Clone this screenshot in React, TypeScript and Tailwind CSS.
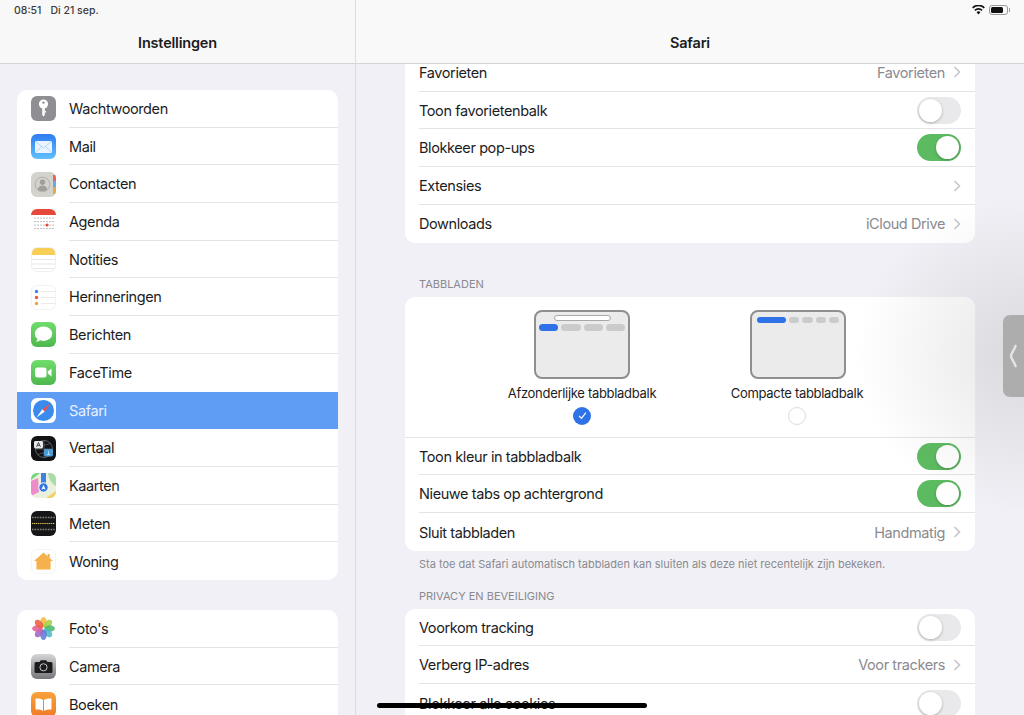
import { ReactNode } from "react";

const font = { fontFamily: "Inter, 'Noto Sans', sans-serif" };

function Tile({ className, children }: { className: string; children?: ReactNode }) {
  return (
    <div className={`w-[25px] h-[25px] rounded-[6px] overflow-hidden shrink-0 ${className}`}>
      <svg viewBox="0 0 25 25" width="25" height="25">
        {children}
      </svg>
    </div>
  );
}

const icons: Record<string, ReactNode> = {
  Wachtwoorden: (
    <Tile className="bg-[#8e8e93]">
      <circle cx="12.5" cy="8" r="4.6" fill="#fff" />
      <circle cx="12.5" cy="6.6" r="1.2" fill="#8e8e93" />
      <path d="M11.2 11h2.6v8l-1.3 1.6-1.3-1.6z" fill="#fff" />
      <path d="M13.5 15h1.5v1.4h-1.5z" fill="#fff" />
    </Tile>
  ),
  Mail: (
    <Tile className="bg-gradient-to-b from-[#2f7cf0] to-[#62c0fb]">
      <rect x="4" y="7" width="17" height="12" rx="1.5" fill="#eaf4ff" />
      <path d="M4.5 7.5l8 6.5 8-6.5M4.5 18.5l6-6M20.5 18.5l-6-6" fill="none" stroke="#9cc7f2" strokeWidth=".7" />
    </Tile>
  ),
  Contacten: (
    <Tile className="bg-[#d3d2cc]">
      <rect x="22" y="3" width="3" height="6" fill="#e2645a" />
      <rect x="22" y="9" width="3" height="6" fill="#6fa8dc" />
      <rect x="22" y="15" width="3" height="7" fill="#e0a94a" />
      <circle cx="11.5" cy="12.5" r="7.3" fill="none" stroke="#a9a8a3" strokeWidth=".8" />
      <circle cx="11.5" cy="10.3" r="2.7" fill="#a09f9a" />
      <path d="M6.6 17.5c.8-3 2.7-4 4.9-4s4.1 1 4.9 4c-1.3 1-3 1.5-4.9 1.5s-3.6-.5-4.9-1.5z" fill="#a09f9a" />
    </Tile>
  ),
  Agenda: (
    <Tile className="bg-white">
      <rect width="25" height="6" fill="#e5493a" />
      <g fill="#77777a">
        {[9, 12.5, 16, 19.5].map((y) =>
          [4, 7, 10, 13, 16, 19, 22].map((x) => <circle key={`${x}-${y}`} cx={x} cy={y} r=".6" />),
        )}
      </g>
      <circle cx="16" cy="16" r="1.6" fill="#e5493a" />
    </Tile>
  ),
  Notities: (
    <Tile className="bg-white border border-[#f0f0f0]">
      <rect width="25" height="7" fill="#f8ce56" />
      <path d="M0 11.5h25M0 16h25M0 20.5h25" stroke="#dcdcdc" strokeWidth=".7" />
    </Tile>
  ),
  Herinneringen: (
    <Tile className="bg-white border border-[#f2f2f2]">
      <circle cx="4.5" cy="5.5" r="1.7" fill="#3b82e8" />
      <circle cx="4.5" cy="11.5" r="1.7" fill="#e5574b" />
      <circle cx="4.5" cy="17.5" r="1.7" fill="#eda13c" />
      <path d="M9 5.5h14M9 11.5h14M9 17.5h14" stroke="#e2e2e4" strokeWidth=".7" />
    </Tile>
  ),
  Berichten: (
    <Tile className="bg-gradient-to-b from-[#6fdc6b] to-[#4eb84e]">
      <ellipse cx="12.5" cy="11.7" rx="8.7" ry="7.3" fill="#fff" />
      <path d="M6.5 16c0 1.6-.8 2.9-1.7 3.7 2 0 3.7-.8 4.9-2z" fill="#fff" />
    </Tile>
  ),
  FaceTime: (
    <Tile className="bg-gradient-to-b from-[#6fdc6b] to-[#4eb84e]">
      <rect x="4" y="7.5" width="11.5" height="10" rx="2.5" fill="#fff" />
      <path d="M16.8 11.4l3.7-2.9v8l-3.7-2.9z" fill="#fff" />
    </Tile>
  ),
  Safari: (
    <Tile className="bg-white">
      <circle cx="12.5" cy="12.5" r="10.5" fill="#3a8bec" />
      <path d="M19.5 5.5l-8.2 5.8 2.4 2.4z" fill="#f0534a" />
      <path d="M5.5 19.5l5.8-8.2 2.4 2.4z" fill="#fff" />
    </Tile>
  ),
  Vertaal: (
    <Tile className="bg-[#111214]">
      <circle cx="13" cy="13" r="8.5" fill="none" stroke="#6f7478" strokeWidth=".8" />
      <path d="M13 4.5v17M4.5 13h17M7 7.5c4 2 8 2 12 0M7 18.5c4-2 8-2 12 0" fill="none" stroke="#6f7478" strokeWidth=".6" />
      <rect x="3" y="5" width="9" height="7.5" rx="1.4" fill="#e8e8e8" />
      <rect x="13" y="13" width="9" height="7.5" rx="1.4" fill="#4a9bd8" />
      <path d="M5.6 10.8l1.9-4.3 1.9 4.3M6.3 9.4h2.4" fill="none" stroke="#111" strokeWidth=".7" />
      <path d="M16 18.6h3M17.5 15v3.6" stroke="#d9eeff" strokeWidth=".7" />
    </Tile>
  ),
  Kaarten: (
    <Tile className="bg-[#e9f0dc]">
      <path d="M0 7l9-7h-9z" fill="#74d47a" />
      <path d="M0 8l7-3 1 14-8 4z" fill="#ec8cc8" />
      <path d="M17 0h8v13c-4-2-7-6-8-13z" fill="#a9dca8" />
      <path d="M15 25l10-7v7z" fill="#f2d266" />
      <rect x="10" y="0" width="5" height="13" fill="#3f80e6" />
      <circle cx="12.5" cy="14.5" r="4.7" fill="#2f74e0" stroke="#fff" strokeWidth="1" />
      <path d="M12.5 11.8l2.2 5-2.2-1-2.2 1z" fill="#fff" />
    </Tile>
  ),
  Meten: (
    <Tile className="bg-[#17171a]">
      <path d="M1 6.5h23M1 18.5h23" stroke="#a09d8c" strokeWidth="1.6" strokeDasharray=".8 .8" />
      <path d="M1 12.5h23" stroke="#e6cf56" strokeWidth="1.1" strokeDasharray="1.2 .7" />
    </Tile>
  ),
  Woning: (
    <Tile className="bg-white border border-[#f4f4f4]">
      <path d="M11.5 2.5L21 11h-2.4v8.5H4.4V11H2z" fill="#f6b14c" />
      <path d="M15.5 4h2.2v4.6l-2.2-2z" fill="#f6b14c" />
    </Tile>
  ),
  "Foto's": (
    <Tile className="bg-white">
      {["#f5b93f", "#a8cf45", "#4fb96d", "#4fb6c8", "#5d7fd6", "#a066c6", "#e2609a", "#ea5f45"].map((c, i) => (
        <ellipse
          key={c}
          cx="12.5"
          cy="6.3"
          rx="3.3"
          ry="5.2"
          fill={c}
          opacity=".88"
          transform={`rotate(${i * 45} 12.5 12.5)`}
        />
      ))}
    </Tile>
  ),
  Camera: (
    <Tile className="bg-gradient-to-b from-[#d6d6d8] to-[#77777b]">
      <path d="M5 8h3.6l1.2-1.8h5.4L16.4 8H20a1.5 1.5 0 0 1 1.5 1.5v8A1.5 1.5 0 0 1 20 19H5a1.5 1.5 0 0 1-1.5-1.5v-8A1.5 1.5 0 0 1 5 8z" fill="#1c1c1e" />
      <circle cx="12.5" cy="13.3" r="3.6" fill="none" stroke="#c7c7c9" strokeWidth="1" />
    </Tile>
  ),
  Boeken: (
    <Tile className="bg-gradient-to-b from-[#f7a23c] to-[#ef7a24]">
      <path d="M12 8c-1.8-1.3-4.5-1.7-7.5-1.5v11c3-.2 5.7.2 7.5 1.5zM13 8c1.8-1.3 4.5-1.7 7.5-1.5v11c-3-.2-5.7.2-7.5 1.5z" fill="#fff" />
    </Tile>
  ),
};

function SideRow({ name, active, last }: { name: string; active?: boolean; last?: boolean }) {
  return (
    <div className={`flex items-center h-[37.7px] pl-[14px] ${active ? "bg-[#5f9cf4]" : ""}`}>
      {icons[name]}
      <div
        className={`flex-1 ml-[13px] h-full pt-[1px] flex items-center text-[14.5px] tracking-[-0.4px] ${
          active ? "text-[#e8f1ff]" : "text-[#1c1c1e]"
        } ${last || active ? "" : "border-b border-[#e4e4e7]"}`}
      >
        {name}
      </div>
    </div>
  );
}

function Toggle({ on }: { on?: boolean }) {
  return (
    <div className={`w-[44px] h-[27px] rounded-full p-[2px] flex ${on ? "bg-[#5cbb60] justify-end" : "bg-[#e9e9eb]"}`}>
      <div className="w-[23px] h-[23px] rounded-full bg-white shadow-[0_1px_3px_rgba(0,0,0,0.25)]" />
    </div>
  );
}

function Chevron() {
  return (
    <svg viewBox="0 0 8 12" width="8" height="12" className="ml-[8px]">
      <path d="M1.5 1l5 5-5 5" fill="none" stroke="#c6c6ca" strokeWidth="1.6" />
    </svg>
  );
}

function Row({ label, value, chevron, toggle, last }: { label: string; value?: string; chevron?: boolean; toggle?: "on" | "off"; last?: boolean }) {
  return (
    <div className={`flex items-center h-[37.7px] ml-[14px] pr-[14px] text-[14.5px] tracking-[-0.4px] ${last ? "" : "border-b border-[#e4e4e7]"}`}>
      <span className="flex-1 pt-[1px] text-[#1c1c1e]">{label}</span>
      {value && <span className="pt-[1px] text-[#8a8a8e]">{value}</span>}
      {chevron && <Chevron />}
      {toggle && <Toggle on={toggle === "on"} />}
    </div>
  );
}

function Preview({ compact }: { compact?: boolean }) {
  return (
    <div className={`w-[96px] h-[69px] rounded-[8px] border-2 border-[#8f8f8f] bg-[#ebebeb] p-[3px] ${compact ? "ml-[2px]" : ""}`}>
      {compact ? (
        <div className="flex gap-[3px] px-[2px] pt-[2px]">
          <div className="w-[29px] h-[6px] rounded-full bg-[#2f72e8]" />
          <div className="flex-1 h-[6px] rounded-full bg-[#cbcbcb]" />
          <div className="flex-1 h-[6px] rounded-full bg-[#cbcbcb]" />
          <div className="flex-1 h-[6px] rounded-full bg-[#cbcbcb]" />
          <div className="flex-1 h-[6px] rounded-full bg-[#cbcbcb]" />
        </div>
      ) : (
        <>
          <div className="mx-auto w-[57px] h-[6px] rounded-full bg-white border border-[#a8a8a8]" />
          <div className="flex gap-[3px] mt-[3px]">
            <div className="flex-1 h-[7px] rounded-full bg-[#2f72e8]" />
            <div className="flex-1 h-[7px] rounded-full bg-[#cbcbcb]" />
            <div className="flex-1 h-[7px] rounded-full bg-[#cbcbcb]" />
            <div className="flex-1 h-[7px] rounded-full bg-[#cbcbcb]" />
          </div>
        </>
      )}
    </div>
  );
}

function TabChoice({ label, compact, checked }: { label: string; compact?: boolean; checked?: boolean }) {
  return (
    <div className="w-[200px] flex flex-col items-center">
      <Preview compact={compact} />
      <div className="mt-[6px] text-[13px] leading-[16px] tracking-[-0.3px] text-[#1c1c1e]">{label}</div>
      <div className="mt-[6px]">
        {checked ? (
          <div className="w-[18px] h-[18px] rounded-full bg-[#2f72e8] flex items-center justify-center">
            <svg viewBox="0 0 12 12" width="11" height="11">
              <path d="M2.3 6.4l2.6 2.8 4.8-6.4" fill="none" stroke="#fff" strokeWidth="1.3" />
            </svg>
          </div>
        ) : (
          <div className="w-[18px] h-[18px] rounded-full border border-[#dcdcde] bg-white" />
        )}
      </div>
    </div>
  );
}

const sideA = ["Wachtwoorden", "Mail", "Contacten", "Agenda", "Notities", "Herinneringen", "Berichten", "FaceTime", "Safari", "Vertaal", "Kaarten", "Meten", "Woning"];
const sideB = ["Foto's", "Camera", "Boeken"];

export default function App() {
  return (
    <div className="relative w-[1024px] h-[715px] overflow-hidden bg-[#f0f0f6] flex" style={font}>
      {/* sidebar */}
      <div className="w-[356px] h-full shrink-0 border-r border-[#dcdcdf] flex flex-col overflow-hidden">
        <div className="h-[64px] shrink-0 bg-[#f8f8f8] border-b border-[#d4d4d6] relative flex items-end justify-center pb-[11px]">
          <div className="absolute left-[14px] top-[4px] text-[10.5px] leading-[13px] text-[#3a3a3c] font-medium flex gap-[9px]">
            <span>08:51</span>
            <span>Di 21 sep.</span>
          </div>
          <span className="text-[14.5px] leading-[18px] tracking-[-0.2px] font-semibold text-[#1c1c1e]">Instellingen</span>
        </div>
        <div className="mx-[17px] mt-[26px] bg-white rounded-[10px] overflow-hidden shrink-0">
          {sideA.map((n, i) => (
            <SideRow key={n} name={n} active={n === "Safari"} last={i === sideA.length - 1 || n === "FaceTime"} />
          ))}
        </div>
        <div className="mx-[17px] mt-[30px] bg-white rounded-[10px] overflow-hidden shrink-0">
          {sideB.map((n, i) => (
            <SideRow key={n} name={n} last={i === sideB.length - 1} />
          ))}
        </div>
      </div>

      {/* detail */}
      <div className="flex-1 h-full flex flex-col overflow-hidden">
        <div className="h-[64px] shrink-0 bg-[#f9f9f9] border-b border-[#d4d4d6] relative z-10 flex items-end justify-center pb-[11px]">
          <div className="absolute right-[14px] top-[5px] flex items-center gap-[4px]">
            <svg viewBox="0 0 16 12" width="13" height="10">
              <path d="M8 11.5L5.6 8.7a3.4 3.4 0 0 1 4.8 0zM4.3 7.2L2.9 5.6a7.2 7.2 0 0 1 10.2 0l-1.4 1.6a5.2 5.2 0 0 0-7.4 0zM1.6 4.2L.2 2.6a11 11 0 0 1 15.6 0l-1.4 1.6a9 9 0 0 0-12.8 0z" fill="#111" />
            </svg>
            <div className="w-[19px] h-[10px] rounded-[3px] border border-[#9a9a9a] p-[1px]">
              <div className="w-[12px] h-full rounded-[1.5px] bg-[#111]" />
            </div>
            <div className="w-[1px] h-[4px] -ml-[3px] bg-[#9a9a9a]" />
          </div>
          <span className="text-[14.5px] leading-[18px] tracking-[-0.2px] font-semibold text-[#1c1c1e]">Safari</span>
        </div>

        <div className="mx-[49px] -mt-[9.9px] bg-white rounded-[10px] shrink-0">
          <Row label="Favorieten" value="Favorieten" chevron />
          <Row label="Toon favorietenbalk" toggle="off" />
          <Row label="Blokkeer pop-ups" toggle="on" />
          <Row label="Extensies" chevron />
          <Row label="Downloads" value="iCloud Drive" chevron last />
        </div>

        <div className="mx-[63px] mt-[34.2px] text-[11px] leading-[14px] text-[#8a8a8e]">TABBLADEN</div>
        <div className="mx-[49px] mt-[6px] bg-white rounded-[10px] shrink-0">
          <div className="h-[141px] pt-[13px] pl-[77px] flex gap-[15px] border-b border-[#e4e4e7]">
            <TabChoice label="Afzonderlijke tabbladbalk" checked />
            <TabChoice label="Compacte tabbladbalk" compact />
          </div>
          <Row label="Toon kleur in tabbladbalk" toggle="on" />
          <Row label="Nieuwe tabs op achtergrond" toggle="on" />
          <Row label="Sluit tabbladen" value="Handmatig" chevron last />
        </div>
        <div className="mx-[63px] mt-[6px] text-[11px] leading-[14px] text-[#8a8a8e]">
          Sta toe dat Safari automatisch tabbladen kan sluiten als deze niet recentelijk zijn bekeken.
        </div>

        <div className="mx-[63px] mt-[18px] text-[11px] leading-[14px] text-[#8a8a8e]">PRIVACY EN BEVEILIGING</div>
        <div className="mx-[49px] mt-[6px] bg-white rounded-[10px] shrink-0">
          <Row label="Voorkom tracking" toggle="off" />
          <Row label="Verberg IP-adres" value="Voor trackers" chevron />
          <Row label="Blokkeer alle cookies" toggle="off" last />
        </div>
      </div>

      {/* slide over shade and handle */}
      <div className="absolute right-0 top-[195px] w-[170px] h-[320px] pointer-events-none bg-[radial-gradient(ellipse_at_right,rgba(120,120,120,0.19),rgba(120,120,120,0)_70%)]" />
      <div className="absolute right-0 top-[315px] w-[21px] h-[82px] rounded-l-[7px] bg-[#adadad] flex items-center pl-[6px]">
        <svg viewBox="0 0 8 24" width="8" height="24">
          <path d="M6.5 2C5.5 6 2 9 2 12s3.5 6 4.5 10" fill="none" stroke="#e2e2e2" strokeWidth="2.6" strokeLinecap="round" />
        </svg>
      </div>

      {/* home indicator */}
      <div className="absolute left-[377px] top-[703px] w-[270px] h-[5px] rounded-full bg-black" />
    </div>
  );
}
